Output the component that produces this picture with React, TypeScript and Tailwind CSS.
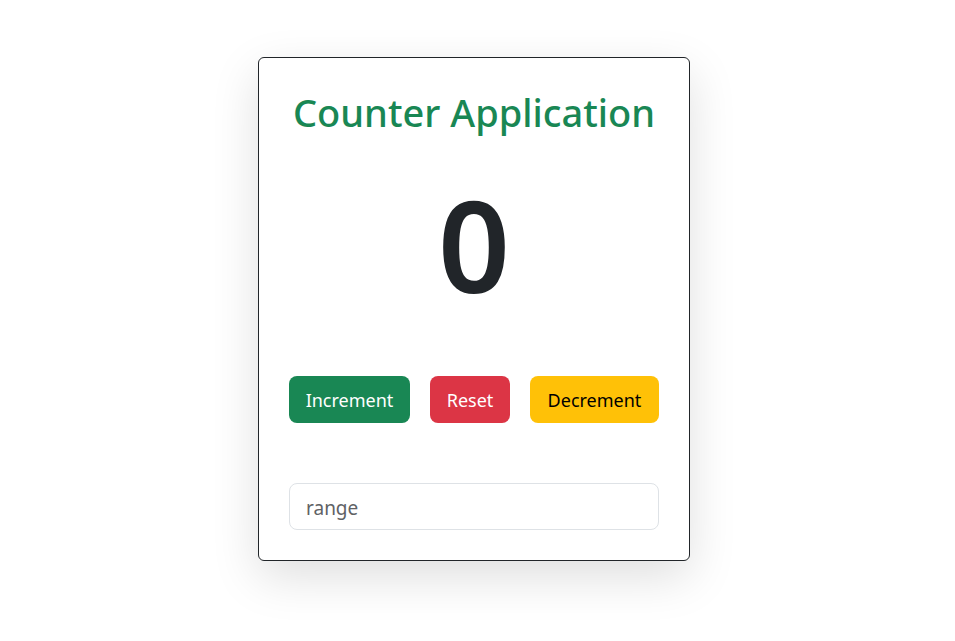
import React, { useState } from "react";

export default function App() {
  const [count, setCount] = useState(0);
  const [range, setRange] = useState("");
  const step = Number(range) || 1;
  return (
    <div
      className="flex justify-center pr-[7px] pt-[57px] min-h-[641px] bg-white"
      style={{ fontFamily: '"Noto Sans", "Open Sans", sans-serif' }}
    >
      <div className="w-[432px] h-[504px] border border-[#212529] rounded-[6px] bg-white px-[30px] pt-[30px] shadow-[0_1rem_3rem_rgba(0,0,0,0.13)] flex flex-col">
        <h1 className="h-[48px] leading-[48px] text-center text-[38px] font-medium text-[#198754] whitespace-nowrap">
          Counter Application
        </h1>
        <div className="h-[215px] flex items-center justify-center">
          <span className="text-[126px] leading-none font-semibold text-[#212529]">{count}</span>
        </div>
        <div className="mt-[25px] flex justify-between h-[47px]">
          <button
            onClick={() => setCount(count + step)}
            className="w-[121px] h-[47px] pt-[2px] rounded-[8px] bg-[#198754] text-white text-[18px] flex items-center justify-center"
          >
            Increment
          </button>
          <button
            onClick={() => setCount(0)}
            className="w-[80px] h-[47px] pt-[2px] rounded-[8px] bg-[#dc3545] text-white text-[18px] flex items-center justify-center"
          >
            Reset
          </button>
          <button
            onClick={() => setCount(count - step)}
            className="w-[129px] h-[47px] pt-[2px] rounded-[8px] bg-[#ffc107] text-black text-[18px] flex items-center justify-center"
          >
            Decrement
          </button>
        </div>
        <input
          value={range}
          onChange={(e) => setRange(e.target.value)}
          placeholder="range"
          className="mt-[60px] h-[47px] w-full rounded-[8px] border border-[#dee2e6] px-[16px] pt-[2px] text-[19px] text-[#212529] placeholder:text-[#5f6265] outline-none"
        />
      </div>
    </div>
  );
}
